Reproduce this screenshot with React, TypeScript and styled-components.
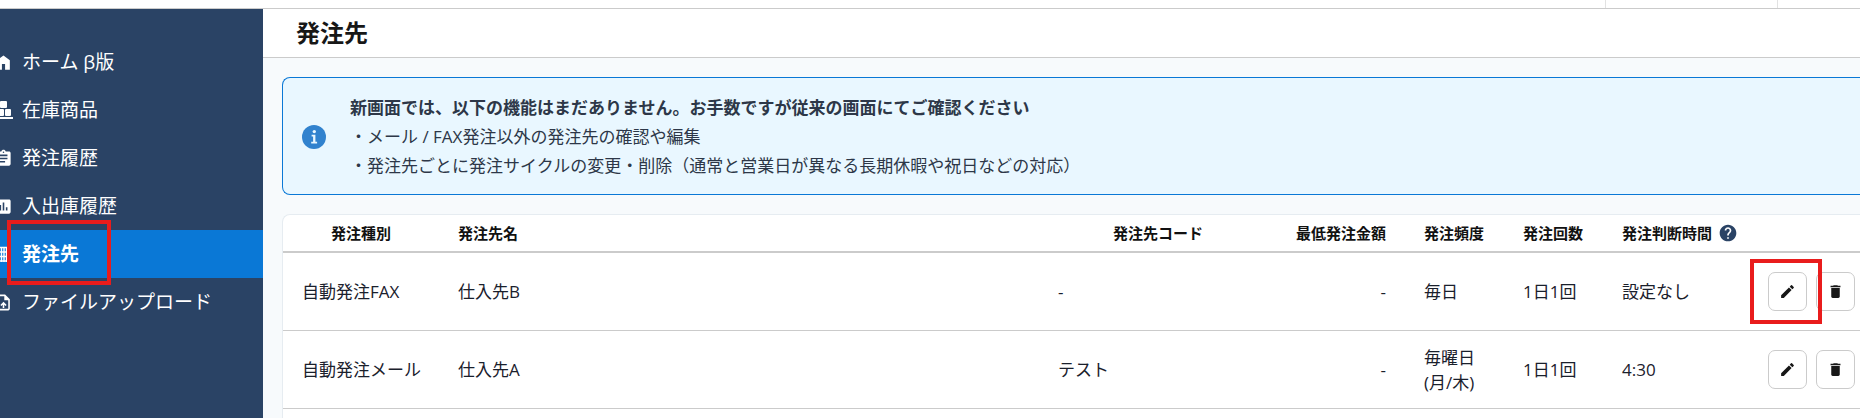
import React from "react";
import styled, { createGlobalStyle, css } from "styled-components";
import { MdAssignment, MdAssessment, MdHelp, MdEdit, MdDelete, MdOutlineUploadFile } from "react-icons/md";

const GlobalStyle = createGlobalStyle`
  *, *::before, *::after { box-sizing: border-box; }
  body {
    margin: 0;
    font-family: "Open Sans", "Noto Sans CJK JP", sans-serif;
    color: #1a202c;
    background: #f7fafc;
  }
`;

const Page = styled.div`
  display: flex;
  flex-direction: column;
  min-height: 100vh;
  overflow: hidden;
`;

const TopBar = styled.header`
  display: flex;
  justify-content: flex-end;
  height: 9px;
  background: #fff;
  border-bottom: 1px solid #cbcbcb;
`;

const TopBarSlot = styled.div<{ $width: number }>`
  width: ${(p) => p.$width}px;
  border-left: 1px solid #e2e2e2;
`;

const Body = styled.div`
  display: flex;
  flex: 1;
`;

const Sidebar = styled.nav`
  flex: 0 0 263px;
  padding-top: 29px;
  background: #2a4365;
`;

const NavList = styled.ul`
  list-style: none;
  margin: 0;
  padding: 0;
`;

const NavItem = styled.li`
  position: relative;
`;

const NavLink = styled.a<{ $active?: boolean }>`
  display: flex;
  align-items: center;
  gap: 9px;
  height: 48px;
  color: #fff;
  font-size: 19px;
  line-height: 24px;
  text-decoration: none;
  ${(p) =>
    p.$active &&
    css`
      background: #0a78d6;
      font-weight: 700;
    `}
`;

const NavIcon = styled.span`
  display: flex;
  justify-content: flex-end;
  width: 13px;
  overflow: hidden;

  svg {
    flex: none;
    width: 19px;
    height: 19px;
  }
`;

const marker = css`
  position: absolute;
  z-index: 1;
  border: 4px solid #e91c1c;
  pointer-events: none;
`;

const NavMarker = styled.span`
  ${marker}
  left: 7px;
  top: -10px;
  width: 104px;
  height: 65px;
`;

const Main = styled.main`
  display: flex;
  flex: 1;
  flex-direction: column;
  min-width: 0;
`;

const TitleBar = styled.div`
  display: flex;
  align-items: center;
  height: 49px;
  padding-left: 33px;
  background: #fff;
  border-bottom: 1px solid #cbcbcb;
`;

const Title = styled.h1`
  margin: 0;
  font-size: 24px;
  line-height: 32px;
  color: #171717;
`;

const Content = styled.div`
  display: flex;
  flex: 1;
  flex-direction: column;
  gap: 19px;
  padding: 19px 0 0 19px;
`;

const Notice = styled.section`
  display: flex;
  align-items: center;
  gap: 24px;
  padding: 15px 19px 14px;
  color: #2d3748;
  background: #e9f7ff;
  border: 1px solid #0a78d6;
  border-right: 0;
  border-radius: 8px 0 0 8px;
  font-size: 17px;
  line-height: 29px;

  svg {
    flex: none;
  }
  p {
    margin: 0;
  }
`;

const Card = styled.section`
  flex: 1;
  background: #fff;
  border: 1px solid #e6ecf1;
  border-width: 1px 0 0 1px;
  border-radius: 8px 0 0 0;
`;

const Table = styled.table`
  width: 100%;
  table-layout: fixed;
  border-collapse: separate;
  border-spacing: 0;
`;

const Col = styled.col<{ $width?: number }>`
  width: ${(p) => (p.$width ? p.$width + "px" : "auto")};
`;

const Th = styled.th<{ $align?: string }>`
  height: 38px;
  padding: 0 19px;
  border-bottom: 2px solid #cbcbcb;
  color: #111;
  font-size: 15px;
  line-height: 20px;
  white-space: nowrap;
  text-align: ${(p) => p.$align || "left"};
`;

const ThLabel = styled.span`
  display: flex;
  align-items: center;
  gap: 6px;

  svg {
    flex: none;
    color: #2a4365;
  }
`;

const Td = styled.td<{ $align?: string }>`
  height: 78px;
  padding: 0 19px;
  border-bottom: 1px solid #cbcbcb;
  font-size: 17px;
  line-height: 25px;
  white-space: pre;
  text-align: ${(p) => p.$align || "left"};

  &:last-child {
    padding-right: 5px;
  }
`;

const Actions = styled.div`
  display: flex;
  gap: 9px;
`;

const IconButton = styled.button`
  position: relative;
  display: flex;
  flex: none;
  align-items: center;
  justify-content: center;
  width: 39px;
  height: 39px;
  padding: 0;
  color: #171717;
  background: #fff;
  border: 1px solid #cbcbcb;
  border-radius: 7px;
`;

const ButtonMarker = styled.span`
  ${marker}
  inset: -14px -16px -14px -19px;
`;

const HomeIcon = () => (
  <svg viewBox="0 0 24 24" fill="currentColor" aria-hidden="true">
    <path d="M4 21V9l8-6 8 6v12h-6v-7h-4v7z" />
  </svg>
);

const StockIcon = () => (
  <svg viewBox="0 0 19 19" fill="currentColor" aria-hidden="true">
    <rect x="6" y="0" width="7" height="7" rx="1" />
    <rect x="2" y="8" width="8" height="7" rx="1" />
    <rect x="11" y="8" width="6" height="7" rx="1" />
    <rect x="0" y="16" width="19" height="2" />
  </svg>
);

const SupplierIcon = () => (
  <svg viewBox="0 0 19 19" fill="none" stroke="currentColor" strokeWidth="1.4" aria-hidden="true">
    <path d="M2 2.5h15M2 7h15M2 11.5h15M2 16h15M3 2v15M7.5 2v15M10 2v15M12.5 2v15M16 2v15" />
  </svg>
);

const InfoIcon = () => (
  <svg width="24" height="24" viewBox="0 0 24 24" aria-hidden="true">
    <circle cx="12" cy="12" r="12" fill="#3182ce" />
    <g fill="#e9f7ff">
      <circle cx="12.3" cy="6.6" r="1.7" />
      <path d="M9.6 9.8h3.8v6.9h1.7v1.8H9.2v-1.8h1.9v-5.1H9.6z" />
    </g>
  </svg>
);

const navItems = [
  { label: "ホーム β版", icon: <HomeIcon /> },
  { label: "在庫商品", icon: <StockIcon /> },
  { label: "発注履歴", icon: <MdAssignment /> },
  { label: "入出庫履歴", icon: <MdAssessment /> },
  { label: "発注先", icon: <SupplierIcon />, active: true },
  { label: "ファイルアップロード", icon: <MdOutlineUploadFile /> },
];

const rows = [
  { type: "自動発注FAX", name: "仕入先B", code: "-", min: "-", freq: "毎日", count: "1日1回", time: "設定なし", marked: true },
  { type: "自動発注メール", name: "仕入先A", code: "テスト", min: "-", freq: "毎曜日\n(月/木)", count: "1日1回", time: "4:30" },
];

export default function App() {
  return (
    <Page>
      <GlobalStyle />
      <TopBar>
        <TopBarSlot $width={172} />
        <TopBarSlot $width={83} />
      </TopBar>
      <Body>
        <Sidebar>
          <NavList>
            {navItems.map((item) => (
              <NavItem key={item.label}>
                <NavLink href="#" $active={item.active} aria-current={item.active ? "page" : undefined}>
                  <NavIcon>{item.icon}</NavIcon>
                  {item.label}
                </NavLink>
                {item.active && <NavMarker />}
              </NavItem>
            ))}
          </NavList>
        </Sidebar>
        <Main>
          <TitleBar>
            <Title>発注先</Title>
          </TitleBar>
          <Content>
            <Notice>
              <InfoIcon />
              <div>
                <p>
                  <strong>新画面では、以下の機能はまだありません。お手数ですが従来の画面にてご確認ください</strong>
                </p>
                <p>・メール / FAX発注以外の発注先の確認や編集</p>
                <p>・発注先ごとに発注サイクルの変更・削除（通常と営業日が異なる長期休暇や祝日などの対応）</p>
              </div>
            </Notice>
            <Card>
              <Table>
                <colgroup>
                  <Col $width={156} />
                  <Col />
                  <Col $width={238} />
                  <Col $width={128} />
                  <Col $width={99} />
                  <Col $width={99} />
                  <Col $width={146} />
                  <Col $width={111} />
                </colgroup>
                <thead>
                  <tr>
                    <Th $align="center">発注種別</Th>
                    <Th>発注先名</Th>
                    <Th $align="center">発注先コード</Th>
                    <Th $align="right">最低発注金額</Th>
                    <Th>発注頻度</Th>
                    <Th>発注回数</Th>
                    <Th>
                      <ThLabel>
                        発注判断時間
                        <MdHelp size={20} />
                      </ThLabel>
                    </Th>
                    <Th aria-label="操作" />
                  </tr>
                </thead>
                <tbody>
                  {rows.map((row) => (
                    <tr key={row.name}>
                      <Td>{row.type}</Td>
                      <Td>{row.name}</Td>
                      <Td>{row.code}</Td>
                      <Td $align="right">{row.min}</Td>
                      <Td>{row.freq}</Td>
                      <Td>{row.count}</Td>
                      <Td>{row.time}</Td>
                      <Td>
                        <Actions>
                          <IconButton type="button" aria-label="編集">
                            <MdEdit size={17} />
                            {row.marked && <ButtonMarker />}
                          </IconButton>
                          <IconButton type="button" aria-label="削除">
                            <MdDelete size={17} />
                          </IconButton>
                        </Actions>
                      </Td>
                    </tr>
                  ))}
                </tbody>
              </Table>
            </Card>
          </Content>
        </Main>
      </Body>
    </Page>
  );
}
